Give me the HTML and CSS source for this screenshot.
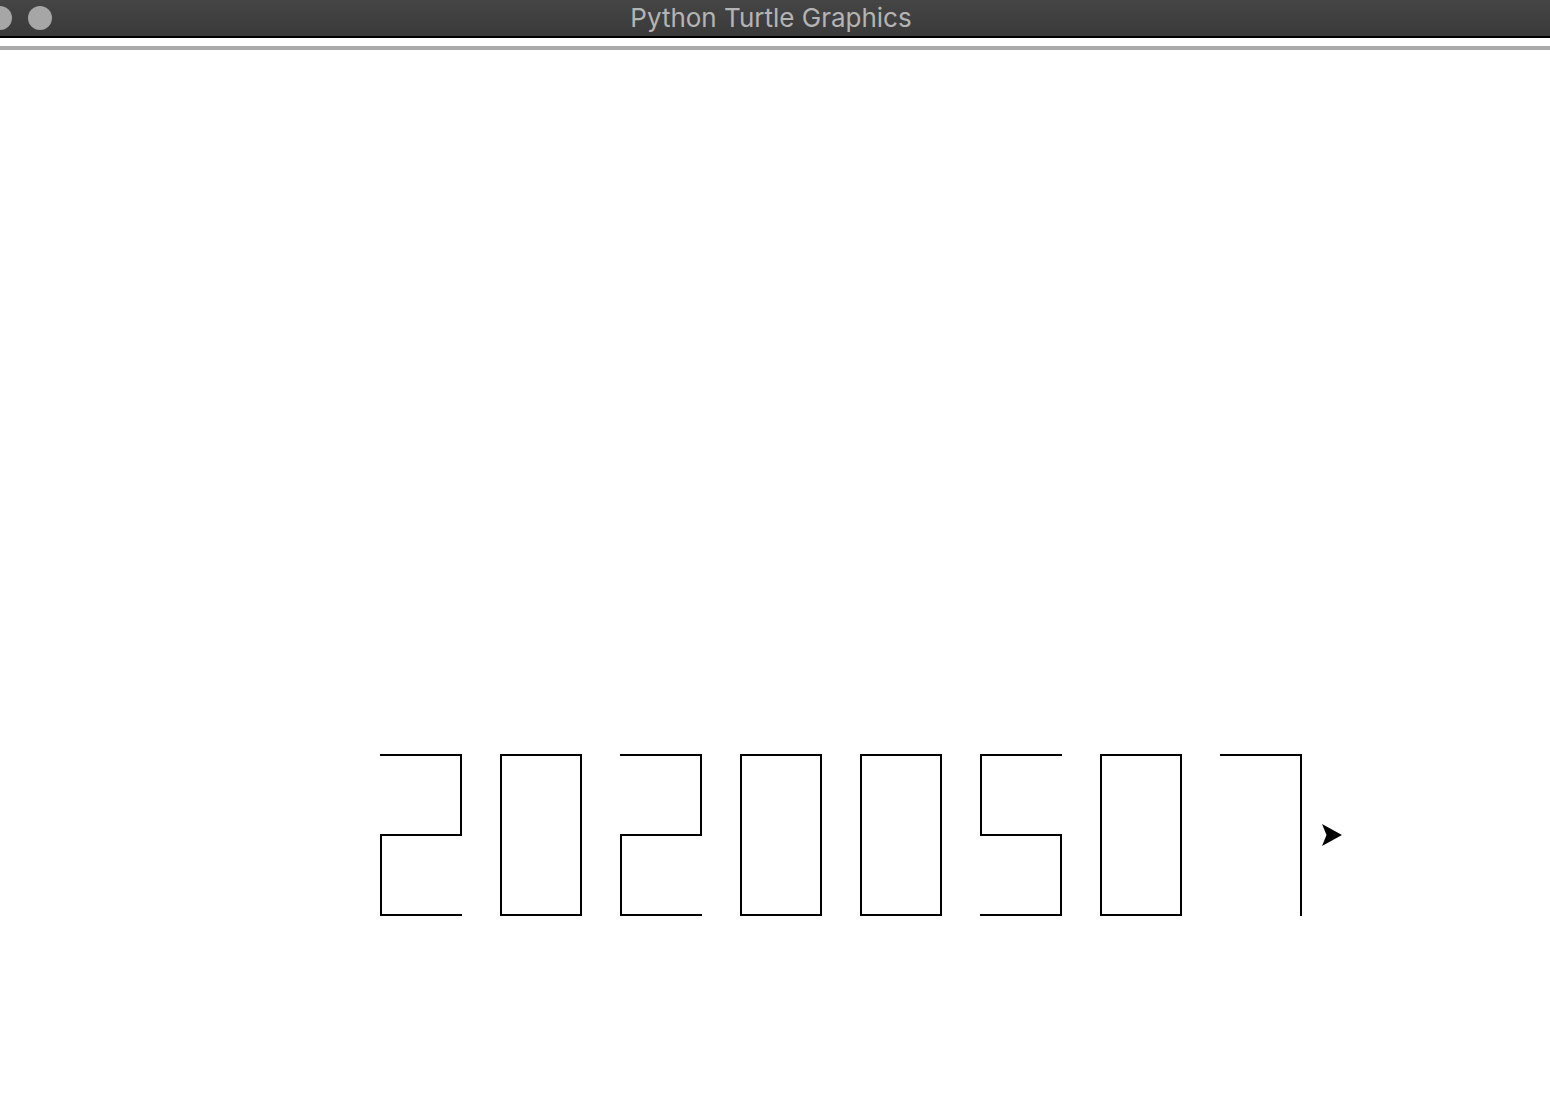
FILE: index.html
```html
<!DOCTYPE html>
<html>
<head>
<meta charset="utf-8">
<title>Python Turtle Graphics</title>
<link rel="stylesheet" href="styles.css">
</head>
<body>
<div class="window">
  <header class="titlebar">
    <div class="lights">
      <span class="light light-first"></span>
      <span class="light"></span>
    </div>
    <div class="title">Python Turtle Graphics</div>
    <div class="spacer"></div>
  </header>
  <div class="gap"></div>
  <div class="rule"></div>
  <svg class="canvas" width="1550" height="1056" viewBox="0 50 1550 1056" xmlns="http://www.w3.org/2000/svg">
    <g class="pen">
      <path d="M381 755 H461 V835 H381 V915 H461"/>
      <path d="M501 755 H581 V915 H501 Z"/>
      <path d="M621 755 H701 V835 H621 V915 H701"/>
      <path d="M741 755 H821 V915 H741 Z"/>
      <path d="M861 755 H941 V915 H861 Z"/>
      <path d="M1061 755 H981 V835 H1061 V915 H981"/>
      <path d="M1101 755 H1181 V915 H1101 Z"/>
      <path d="M1221 755 H1301 V915"/>
    </g>
    <polygon class="turtle" points="1342,835 1322,824 1326.5,835 1322,846"/>
  </svg>
</div>
</body>
</html>
```

FILE: styles.css
```css
html, body {
  margin: 0;
  padding: 0;
  background: #ffffff;
}

.window {
  width: 1550px;
  height: 1106px;
  overflow: hidden;
  display: flex;
  flex-direction: column;
}

.titlebar {
  height: 36px;
  flex: 0 0 36px;
  background: linear-gradient(#454545, #3a3a3a);
  border-bottom: 2px solid #000000;
  display: grid;
  grid-template-columns: 1fr auto 1fr;
  align-items: center;
}

.lights {
  display: flex;
  gap: 16px;
  align-items: center;
}

.light {
  width: 24px;
  height: 24px;
  border-radius: 50%;
  background: #a6a6a6;
}

.light-first {
  margin-left: -12px;
}

.title {
  font-family: "Inter", "Roboto", "Liberation Sans", sans-serif;
  font-size: 26px;
  color: #b4b4b4;
  padding-right: 8px;
  line-height: 34px;
}

.gap {
  height: 8px;
  flex: 0 0 8px;
  background: #ffffff;
}

.rule {
  height: 4px;
  flex: 0 0 4px;
  background: #aaaaaa;
}

.canvas {
  display: block;
  flex: 0 0 auto;
}

.pen path {
  fill: none;
  stroke: #000000;
  stroke-width: 2;
  stroke-linecap: square;
  stroke-linejoin: miter;
}

.turtle {
  fill: #000000;
}
```
